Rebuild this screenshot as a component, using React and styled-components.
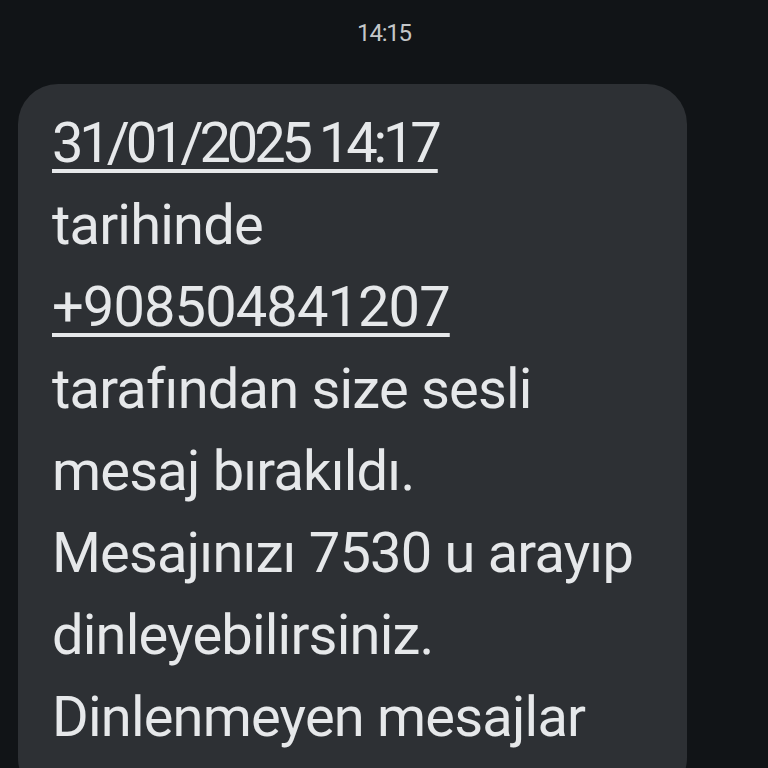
import React from "react";
import styled, { createGlobalStyle } from "styled-components";

const GlobalStyle = createGlobalStyle`
  html, body {
    margin: 0;
    padding: 0;
    background: #111417;
    overflow: hidden;
  }
  body {
    font-family: Roboto, "Noto Sans", sans-serif;
  }
`;

const lines = [
  { text: "31/01/2025 14:17", link: true, tight: true },
  { text: "tarihinde" },
  { text: "+908504841207", link: true },
  { text: "tarafından size sesli" },
  { text: "mesaj bırakıldı." },
  { text: "Mesajınızı 7530 u arayıp" },
  { text: "dinleyebilirsiniz." },
  { text: "Dinlenmeyen mesajlar" },
];

const App = () => {
  return (
    <>
      <GlobalStyle />
      <Screen>
        <Timestamp>14:15</Timestamp>
        <Thread>
          <Bubble>
            {lines.map((l, i) => (
              <Line key={i}>
                {l.link ? <Link $tight={l.tight}>{l.text}</Link> : l.text}
              </Line>
            ))}
          </Bubble>
        </Thread>
      </Screen>
    </>
  );
};

const Screen = styled.div`
  width: 768px;
  height: 768px;
  display: flex;
  flex-direction: column;
  overflow: hidden;
`;

const Timestamp = styled.div`
  flex-shrink: 0;
  text-align: center;
  color: #c4c7c9;
  font-size: 24px;
  letter-spacing: -1.2px;
  line-height: 28px;
  padding-top: 19px;
  height: 84px;
  box-sizing: border-box;
`;

const Thread = styled.div`
  flex-shrink: 0;
  display: flex;
  padding-left: 18px;
`;

const Bubble = styled.div`
  width: 669px;
  box-sizing: border-box;
  background: #2d3034;
  border-radius: 40px;
  padding: 18px 34px 40px;
  color: #e6e8ea;
  font-size: 56px;
  line-height: 82px;
  letter-spacing: -0.8px;
`;

const Line = styled.div`
  white-space: nowrap;
`;

const Link = styled.span`
  text-decoration: underline;
  text-decoration-thickness: 4px;
  text-underline-offset: 7px;
  letter-spacing: ${(p) => (p.$tight ? "-4.1px" : "-0.9px")};
`;

export default App;
